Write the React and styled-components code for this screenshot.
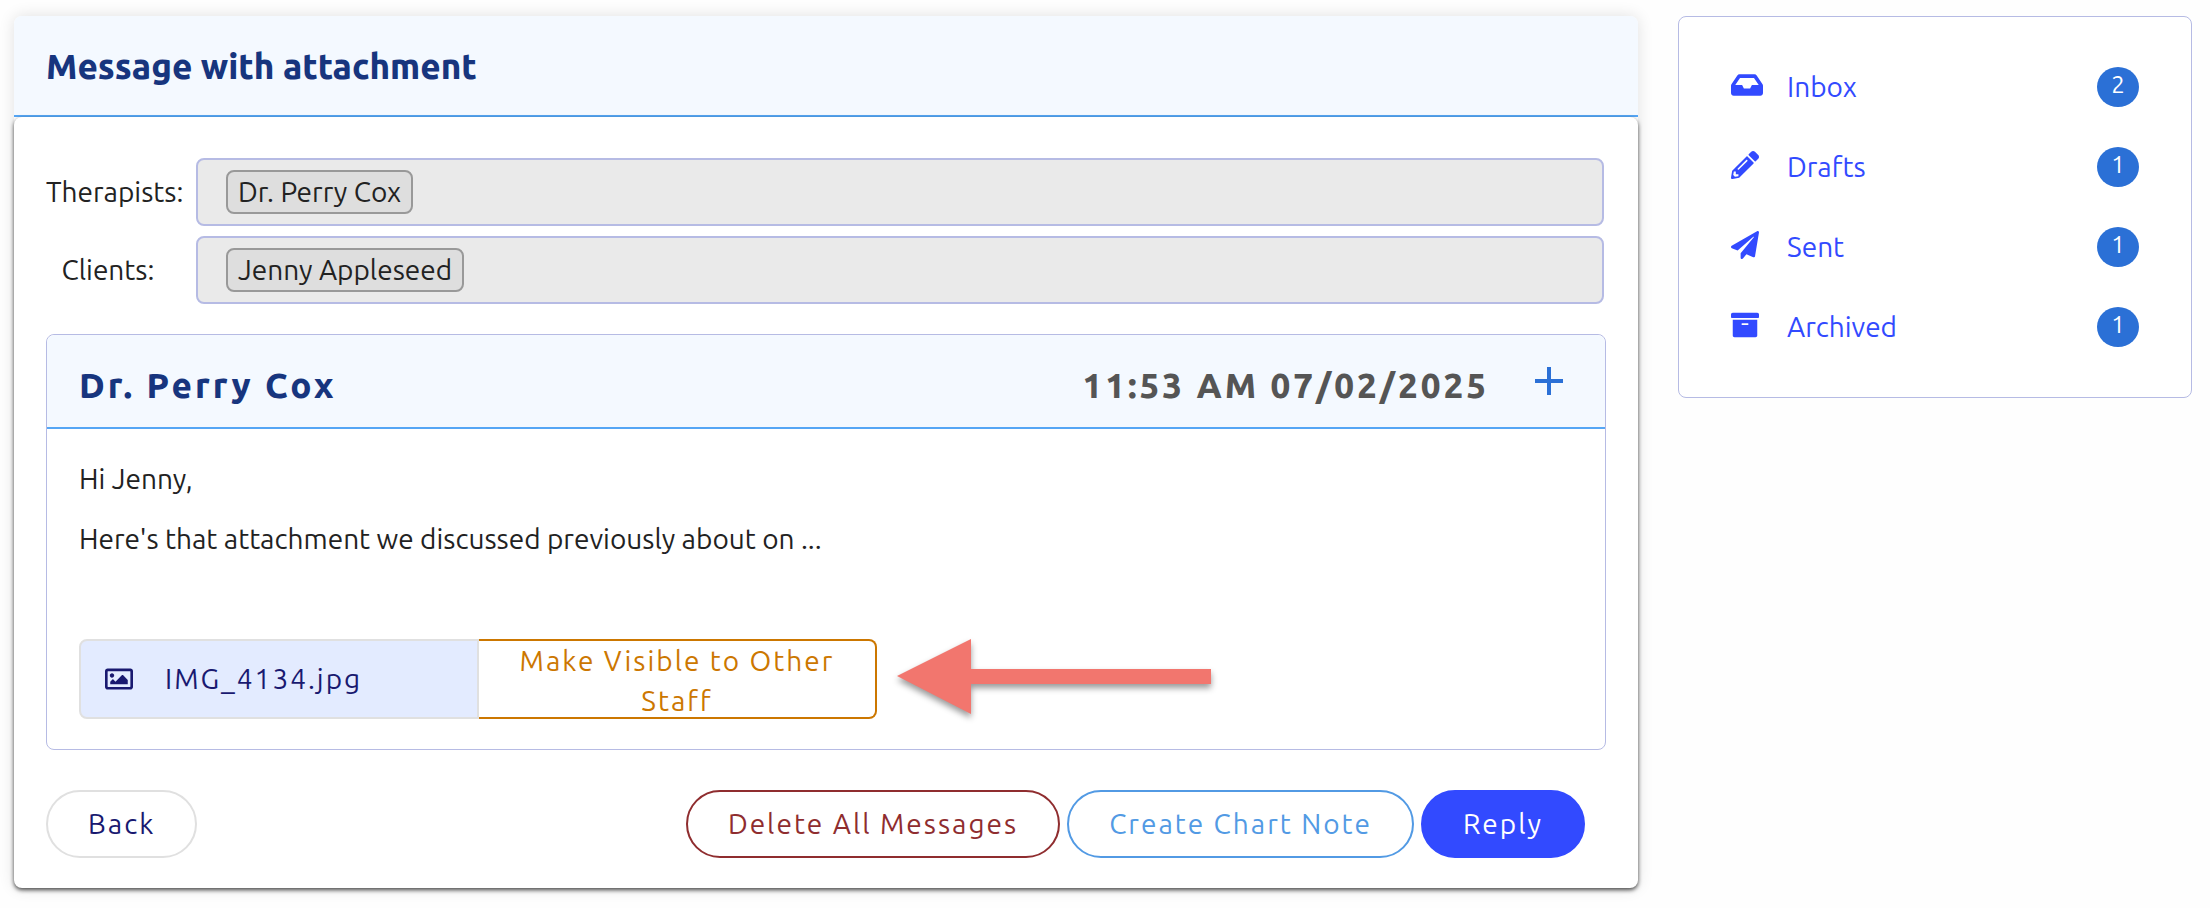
import React from 'react'
import styled, { createGlobalStyle } from 'styled-components'
import { FaInbox, FaPencilAlt, FaPaperPlane, FaArchive, FaRegImage } from 'react-icons/fa'

const folders = [
    { name: 'Inbox', count: 2, icon: <FaInbox size={32} /> },
    { name: 'Drafts', count: 1, icon: <FaPencilAlt /> },
    { name: 'Sent', count: 1, icon: <FaPaperPlane /> },
    { name: 'Archived', count: 1, icon: <FaArchive /> },
]

const recipients = [
    { label: 'Therapists:', people: ['Dr. Perry Cox'] },
    { label: 'Clients:', people: ['Jenny Appleseed'] },
]

const App = () => {
  return (
    <>
      <GlobalStyle />
      <Page>
        <Card>
            <CardHeader>
                <Title>Message with attachment</Title>
            </CardHeader>
            <CardBody>
                <Recipients>
                    {recipients.map(({ label, people }) => (
                        <React.Fragment key={label}>
                            <Label>{label}</Label>
                            <Field>
                                {people.map(person => <Chip key={person}>{person}</Chip>)}
                            </Field>
                        </React.Fragment>
                    ))}
                </Recipients>

                <Message>
                    <MessageHeader>
                        <Sender>Dr. Perry Cox</Sender>
                        <SentAt>11:53 AM 07/02/2025</SentAt>
                        <Expand type="button" aria-label="Expand message">
                            <svg width="28" height="28" viewBox="0 0 28 28">
                                <path d="M12 0h4v12h12v4H16v12h-4V16H0v-4h12z" fill="currentColor" />
                            </svg>
                        </Expand>
                    </MessageHeader>
                    <MessageBody>
                        <p>Hi Jenny,</p>
                        <p>Here's that attachment we discussed previously about on ...</p>
                        <Attachment>
                            <FileButton type="button">
                                <FaRegImage />
                                IMG_4134.jpg
                            </FileButton>
                            <VisibleButton type="button">Make Visible to Other Staff</VisibleButton>
                            <Arrow width="314" height="75" viewBox="0 0 314 75">
                                <path d="M0 37L74 0v30h240v15H74v30z" fill="#f2766e" />
                            </Arrow>
                        </Attachment>
                    </MessageBody>
                </Message>

                <Actions>
                    <Button type="button" $color="#191970" $border="#e0e0e0">Back</Button>
                    <ActionGroup>
                        <Button type="button" $color="#8f2d2f">Delete All Messages</Button>
                        <Button type="button" $color="#529ae4">Create Chart Note</Button>
                        <Button type="button" $color="#ffffff" $border="#324aff" $fill="#324aff">Reply</Button>
                    </ActionGroup>
                </Actions>
            </CardBody>
        </Card>

        <Sidebar>
            {folders.map(({ name, count, icon }) => (
                <Folder href="#" key={name}>
                    <FolderIcon>{icon}</FolderIcon>
                    {name}
                    <Badge>{count}</Badge>
                </Folder>
            ))}
        </Sidebar>
      </Page>
    </>
  )
}

export default App

const GlobalStyle = createGlobalStyle`
    * {
        box-sizing: border-box;
    }
    body {
        margin: 0;
        background-color: #fefefe;
        color: #222222;
        font-family: "Ubuntu", "Noto Sans", sans-serif;
        font-size: 28px;
        line-height: 40px;
    }
    button {
        font: inherit;
        letter-spacing: 2px;
        cursor: pointer;
    }
`
const Page = styled.div`
    display: grid;
    grid-template-columns: minmax(0, 1624fr) minmax(0, 514fr);
    align-items: start;
    gap: 40px;
    padding: 16px 18px 20px 14px;
`
const Card = styled.main`
    border-radius: 8px;
    box-shadow: 0 0 16px rgba(0, 0, 0, 0.12);
`
const CardHeader = styled.header`
    padding: 30px 32px 29px;
    background-color: #f4f9ff;
    border-bottom: 2px solid #55a6f5;
    border-radius: 8px 8px 0 0;
`
const Title = styled.h1`
    margin: 0;
    color: #17357e;
    font-size: 35px;
    font-weight: 800;
    line-height: 40px;
`
const CardBody = styled.div`
    padding: 41px 32px 30px;
    background-color: #ffffff;
    border-radius: 8px;
    box-shadow: 0 2px 4px rgba(0, 0, 0, 0.7);
`
const Recipients = styled.div`
    display: grid;
    grid-template-columns: 140px minmax(0, 1fr);
    align-items: center;
    gap: 10px;
    padding-right: 2px;
    margin-bottom: 30px;
`
const Label = styled.div`
    justify-self: start;
    min-width: 124px;
    text-align: center;
    white-space: nowrap;
`
const Field = styled.div`
    display: flex;
    align-items: center;
    gap: 10px;
    height: 68px;
    padding: 0 28px;
    background-color: #eaeaea;
    border: 2px solid #b6bbe4;
    border-radius: 8px;
`
const Chip = styled.span`
    padding: 0 10px;
    background-color: #dedede;
    border: 2px solid #999999;
    border-radius: 8px;
`
const Message = styled.section`
    border: 1px solid #b6bbe4;
    border-radius: 8px;
`
const MessageHeader = styled.header`
    display: flex;
    align-items: center;
    gap: 46px;
    height: 94px;
    padding: 8px 42px 0 32px;
    background-color: #f4f9ff;
    border-bottom: 2px solid #55a6f5;
    border-radius: 8px 8px 0 0;
    font-size: 35px;
`
const Sender = styled.h2`
    flex: 1;
    margin: 0;
    color: #17357e;
    font-size: 35px;
    font-weight: 800;
    letter-spacing: 3px;
`
const SentAt = styled.time`
    color: #555555;
    font-weight: 800;
    letter-spacing: 3px;
`
const Expand = styled.button`
    display: flex;
    padding: 0 0 8px;
    color: #2b70d6;
    background: none;
    border: none;
`
const MessageBody = styled.div`
    padding: 30px 32px 30px;

    p {
        margin: 0 0 20px;
    }
`
const Attachment = styled.div`
    display: flex;
    align-items: flex-start;
    padding-top: 60px;
`
const FileButton = styled.button`
    display: flex;
    align-items: center;
    gap: 32px;
    width: 400px;
    height: 80px;
    padding: 0 24px;
    color: #191970;
    background-color: #e3ebff;
    border: 2px solid #e0e0e0;
    border-radius: 8px 0 0 8px;
`
const VisibleButton = styled.button`
    width: 398px;
    height: 80px;
    padding: 0 16px;
    color: #cc7700;
    background-color: #ffffff;
    border: 2px solid #cc7700;
    border-left: none;
    border-radius: 0 8px 8px 0;
`
const Arrow = styled.svg`
    flex-shrink: 0;
    margin-left: 20px;
    overflow: visible;
    filter: drop-shadow(0 4px 3px rgba(0, 0, 0, 0.4));
`
const Actions = styled.div`
    display: flex;
    justify-content: space-between;
    padding: 40px 21px 0 0;
`
const ActionGroup = styled.div`
    display: flex;
    gap: 7px;
`
const Button = styled.button`
    height: 68px;
    padding: 0 40px;
    color: ${props => props.$color};
    background-color: ${props => props.$fill || '#ffffff'};
    border: 2px solid ${props => props.$border || props.$color};
    border-radius: 34px;
`
const Sidebar = styled.nav`
    display: flex;
    flex-direction: column;
    gap: 40px;
    padding: 50px 52px;
    background-color: #ffffff;
    border: 1px solid #b6bbe4;
    border-radius: 8px;
`
const Folder = styled.a`
    display: flex;
    align-items: center;
    height: 40px;
    color: #324aff;
    text-decoration: none;
`
const FolderIcon = styled.span`
    display: flex;
    width: 56px;
    padding-bottom: 4px;
`
const Badge = styled.span`
    width: 42px;
    height: 40px;
    margin-left: auto;
    color: #ffffff;
    background-color: #2b70d6;
    border-radius: 50%;
    font-size: 24px;
    line-height: 36px;
    text-align: center;
`
